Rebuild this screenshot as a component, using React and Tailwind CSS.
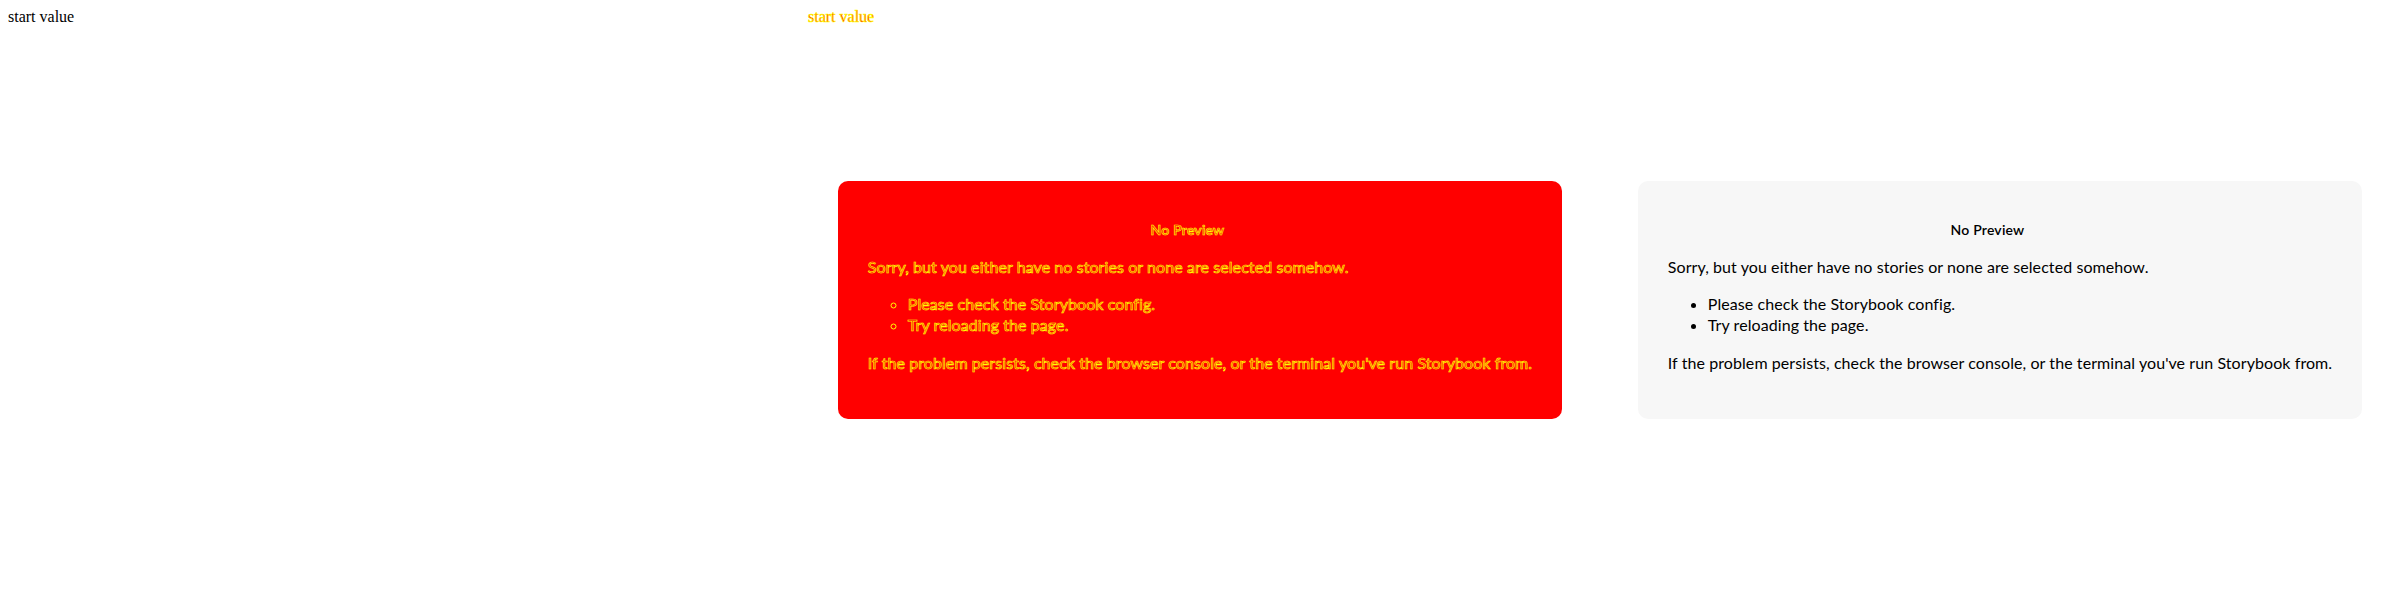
import React from 'react';

const diffText = 'text-[#ff0000] [-webkit-text-stroke:0.7px_#ffff00]';

const NoPreview = ({ diff }) => {
    // the same card is used for the real render and for the diff pane
    const box = diff ? 'bg-[#ff0000] ' + diffText : 'bg-[#f7f7f7] text-black';
    return (
        <div className="[grid-area:1/1] flex items-center justify-center p-5 font-['Lato',sans-serif]">
            <div className={`m-auto p-[30px] rounded-[10px] text-[16px] leading-[21.3px] tracking-[0.08px] ${box}`}>
                <h1 className="my-[10px] pr-[25px] text-center text-[14px] font-semibold leading-[18.6px] tracking-[0.2px]">
                    No Preview
                </h1>
                <p className="my-4">Sorry, but you either have no stories or none are selected somehow.</p>
                <ul className={`my-4 pl-10 ${diff ? 'list-[circle] marker:text-[#ffff00]' : 'list-disc'}`}>
                    <li>Please check the Storybook config.</li>
                    <li>Try reloading the page.</li>
                </ul>
                <p className="my-4">
                    If the problem persists, check the browser console, or the terminal you've run Storybook from.
                </p>
            </div>
        </div>
    );
};

const StartValue = ({ diff }) => (
    <div className={`[grid-area:1/1] self-start m-2 font-['Liberation_Serif',serif] text-[16px] leading-[18px] ${diff ? 'text-[#ff0000] [-webkit-text-stroke:0.6px_#ffff00]' : 'text-black'}`}>
        start value
    </div>
);

export default function App() {
    return (
        <div className="flex w-[2400px] h-[600px] bg-white">
            {/* before */}
            <div className="grid w-[800px] h-[600px]">
                <StartValue />
            </div>

            {/* diff */}
            <div className="grid w-[800px] h-[600px]">
                <StartValue diff />
                <NoPreview diff />
            </div>

            {/* after */}
            <div className="grid w-[800px] h-[600px]">
                <NoPreview />
            </div>
        </div>
    );
}
